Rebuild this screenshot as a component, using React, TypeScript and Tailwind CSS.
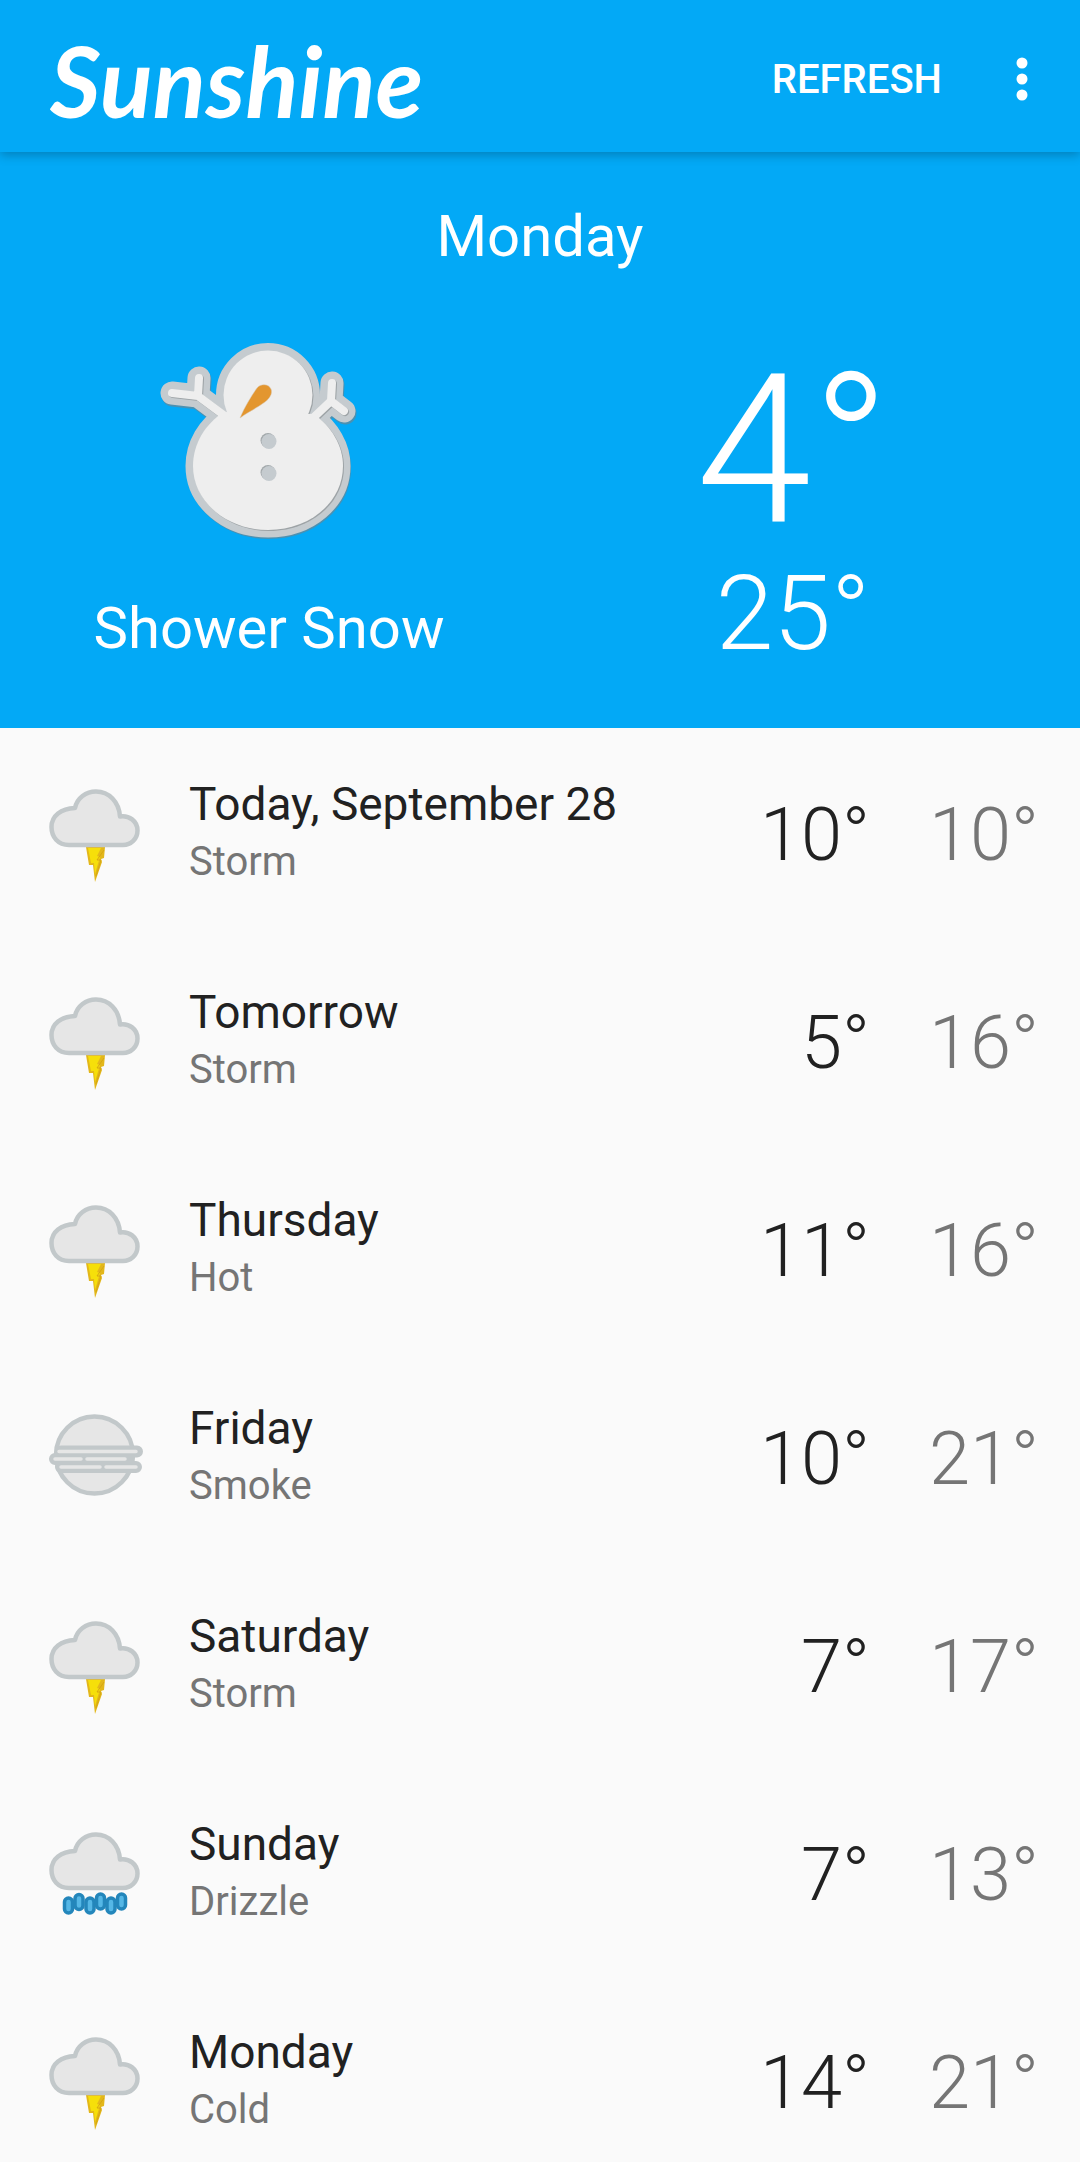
import React from "react";

type Condition = "storm" | "fog" | "rain";

interface Forecast {
  day: string;
  summary: string;
  icon: Condition;
  high: number;
  low: number;
}

const forecasts: Forecast[] = [
  { day: "Today, September 28", summary: "Storm", icon: "storm", high: 10, low: 10 },
  { day: "Tomorrow", summary: "Storm", icon: "storm", high: 5, low: 16 },
  { day: "Thursday", summary: "Hot", icon: "storm", high: 11, low: 16 },
  { day: "Friday", summary: "Smoke", icon: "fog", high: 10, low: 21 },
  { day: "Saturday", summary: "Storm", icon: "storm", high: 7, low: 17 },
  { day: "Sunday", summary: "Drizzle", icon: "rain", high: 7, low: 13 },
  { day: "Monday", summary: "Cold", icon: "storm", high: 14, low: 21 },
];

const cloudPath =
  "M39 75 C28 75 21.500 67 21.500 57 C21.500 46 31 38.500 45 38 C47 28 56 21.500 66 21.500 C79 21.500 89 32 90 46.500 C99 45 107.500 51 107.500 60.500 C107.500 69 101 75 93 75 Z";

function Cloud() {
  return <path d={cloudPath} fill="#e6e6e6" stroke="#c2c8ca" strokeWidth="4.500" strokeLinejoin="round" />;
}

function StormIcon() {
  return (
    <svg viewBox="0 0 130 130" className="size-[130px]" aria-hidden="true">
      <path d="M56 77 H75 L74 88 L71 89 L72 92 L65 112 L63 95 H59 Z" fill="#e3b71a" />
      <path d="M58 78 H71 L67 86 L70 87 L65 104 L64 93 H61 Z" fill="#f6df0a" />
      <path d="M74 80 L67 90 H71 L66 106" fill="none" stroke="#d6a712" strokeWidth="1" />
      <Cloud />
    </svg>
  );
}

function FogIcon() {
  return (
    <svg viewBox="0 0 130 130" className="size-[130px]" aria-hidden="true">
      <circle cx="64.500" cy="61" r="38.500" fill="#e6e6e6" stroke="#c2c8ca" strokeWidth="4.500" />
      <path d="M31 57.500 H107 M25 65 H98 M31 73 H106" fill="none" stroke="#c2c8ca" strokeWidth="12" strokeLinecap="round" />
      <path d="M29 57.500 H106 M25 65 H51 M57 65 H95 M31 73 H70 M76 73 H106" fill="none" stroke="#e6e6e6" strokeWidth="3.500" strokeLinecap="round" />
    </svg>
  );
}

const drops = [
  [38.5, 95],
  [49, 91.5],
  [60, 95],
  [70.5, 91],
  [81, 95],
  [91.5, 91],
];

function RainIcon() {
  return (
    <svg viewBox="0 0 130 130" className="size-[130px]" aria-hidden="true">
      <g transform="translate(0 3)">
        <Cloud />
      </g>
      {drops.map(([x, y]) => (
        <rect key={x} x={x - 4} y={y - 7} width="8" height="15" rx="4" fill="#55b7e6" stroke="#2386bb" strokeWidth="3.500" />
      ))}
    </svg>
  );
}

const icons: Record<Condition, () => React.JSX.Element> = {
  storm: StormIcon,
  fog: FogIcon,
  rain: RainIcon,
};

function SnowmanIcon() {
  const arms = "M33 73 L59 76 L86 96 M60 58 L59 76 M193 63 L192 81 L174 98 M192 81 L205 91";
  const bodyShape = (
    <>
      <circle cx="129" cy="75" r="44.500" />
      <path d="M85 92 C66 104 54 124 54 146 C54 182 88 210 129 210 C171 210 204 182 204 146 C204 126 193 107 175 94 Z" />
    </>
  );
  return (
    <svg viewBox="10 0 240 240" className="size-[240px]" role="img" aria-label="Snowman">
      <g transform="translate(1 2)" fill="#6a8796" stroke="#6a8796" strokeLinejoin="round" strokeLinecap="round" opacity="0.700">
        <g strokeWidth="14">{bodyShape}</g>
        <path d={arms} fill="none" strokeWidth="23" />
      </g>
      <g fill="#c5cbcf" stroke="#c5cbcf" strokeLinejoin="round" strokeLinecap="round">
        <g strokeWidth="15">{bodyShape}</g>
        <path d={arms} fill="none" strokeWidth="23" />
      </g>
      <g transform="translate(1 1)" fill="#9da3a6" stroke="#9da3a6">
        <g strokeWidth="0">{bodyShape}</g>
        <path d={arms} fill="none" strokeWidth="8" strokeLinecap="round" strokeLinejoin="round" />
      </g>
      <g fill="#eeeeee">{bodyShape}</g>
      <path d={arms} fill="none" stroke="#eeeeee" strokeWidth="8" strokeLinecap="round" strokeLinejoin="round" />
      <path d="M101 98 C106 86 113 75 118 68 C122 63 130 64 132 69 C134 74 130 79 126 82 C118 88 109 92 101 98 Z" fill="#e3962f" stroke="#d9c9b4" strokeWidth="0.500" />
      <circle cx="129" cy="120.500" r="7.500" fill="#a2a8ab" />
      <circle cx="130" cy="121.500" r="7.500" fill="#c5cbcf" />
      <circle cx="129" cy="152.500" r="7.500" fill="#a2a8ab" />
      <circle cx="130" cy="153.500" r="7.500" fill="#c5cbcf" />
    </svg>
  );
}

function ForecastRow({ day, summary, icon, high, low }: Forecast) {
  const Icon = icons[icon];
  return (
    <li className="flex h-[208px] shrink-0 items-center pt-1.5 pr-[41px] pl-[30px]">
      <Icon />
      <div className="ml-[29px] flex-1">
        <h2 className="text-[46px] leading-[54px] text-[#212121]">{day}</h2>
        <p className="text-[40px] leading-[62px] text-[#757575]">{summary}</p>
      </div>
      <span className="w-[168px] text-right text-[74px] leading-[88px] font-light text-[#212121]">{high}°</span>
      <span className="w-[169px] text-right text-[74px] leading-[88px] font-light text-[#757575]">{low}°</span>
    </li>
  );
}

export default function App() {
  return (
    <div className="flex h-screen flex-col overflow-hidden bg-[#fafafa] font-[Roboto,sans-serif]">
      <header className="z-10 flex h-[152px] shrink-0 items-center justify-between bg-[#03a9f6] pt-2 pr-[34px] pl-[50px] text-white shadow-[0_3px_10px_rgba(0,0,0,0.25)]">
        <h1 className="font-[Lato,sans-serif] text-[98px] leading-[120px] font-bold italic">Sunshine</h1>
        <div className="flex items-center gap-14">
          <button type="button" className="text-[40px] leading-[48px] font-medium">
            REFRESH
          </button>
          <button type="button" aria-label="More options" className="flex size-12 items-center justify-center">
            <svg viewBox="0 0 48 48" className="size-12" fill="currentColor" aria-hidden="true">
              <circle cx="24" cy="7" r="5.500" />
              <circle cx="24" cy="23" r="5.500" />
              <circle cx="24" cy="39" r="5.500" />
            </svg>
          </button>
        </div>
      </header>

      <section className="flex h-[576px] shrink-0 flex-col bg-[#03a9f6] pt-12 text-white">
        <h2 className="text-center text-[58px] leading-[72px]">Monday</h2>
        <div className="grid flex-1 grid-cols-2">
          <div className="flex flex-col items-center pt-12 pr-0.5">
            <SnowmanIcon />
            <p className="mt-8 text-[58px] leading-[72px]">Shower Snow</p>
          </div>
          <div className="flex flex-col items-center pt-[70px] pr-[34px] font-light">
            <p className="text-[208px] leading-[216px]">4°</p>
            <p className="text-[104px] leading-[112px]">25°</p>
          </div>
        </div>
      </section>

      <ul className="flex min-h-0 flex-1 flex-col overflow-y-auto [scrollbar-width:none]">
        {forecasts.map((forecast) => (
          <ForecastRow key={forecast.day} {...forecast} />
        ))}
      </ul>
    </div>
  );
}
